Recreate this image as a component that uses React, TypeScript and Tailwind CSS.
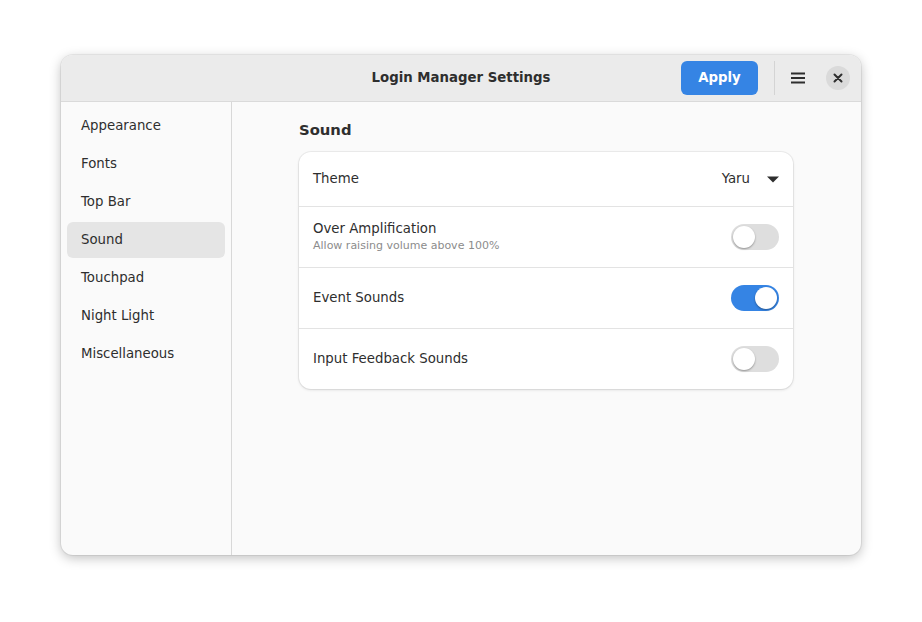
import { useState } from 'react';

const sections = ['Appearance', 'Fonts', 'Top Bar', 'Sound', 'Touchpad', 'Night Light', 'Miscellaneous'];

function Toggle({ on, onChange }: { on: boolean; onChange: () => void }) {
  return (
    <button
      onClick={onChange}
      className={`relative w-[48px] h-[26px] rounded-full shrink-0 ${on ? 'bg-[#3584e4]' : 'bg-[#dedede]'}`}
    >
      <span
        className={`absolute top-[2px] w-[22px] h-[22px] rounded-full bg-white shadow-[0_1px_2px_rgba(0,0,0,0.35)] ${on ? 'left-[24px]' : 'left-[2px]'}`}
      />
    </button>
  );
}

export default function App() {
  const [active, setActive] = useState('Sound');
  const [overAmp, setOverAmp] = useState(false);
  const [eventSounds, setEventSounds] = useState(true);
  const [feedback, setFeedback] = useState(false);

  return (
    <div
      className="w-[922px] h-[622px] bg-white pt-[55px] pl-[61px] text-[#2e2e2e]"
      style={{ fontFamily: '"DejaVu Sans", "Noto Sans", sans-serif' }}
    >
      <div className="w-[800px] h-[500px] rounded-[12px] overflow-hidden flex flex-col bg-[#fafafa] shadow-[0_3px_12px_rgba(0,0,0,0.25),0_0_0_1px_rgba(0,0,0,0.06)]">
        {/* Header bar */}
        <header className="relative h-[47px] shrink-0 bg-[#ebebeb] border-b border-[#dadada] flex items-center justify-end pr-[11px] pb-[1px]">
          <div className="absolute inset-0 flex items-center justify-center pointer-events-none">
            <span className="text-[13.3px] font-bold text-[#2e2e2e]">Login Manager Settings</span>
          </div>
          <button className="h-[34px] w-[77px] rounded-[6px] bg-[#3584e4] text-white text-[13.3px] font-bold">
            Apply
          </button>
          <div className="w-px h-[34px] bg-[#d4d4d4] ml-[16px] mr-[11px]" />
          <button className="w-[24px] h-[24px] flex items-center justify-center">
            <svg width="16" height="16" viewBox="0 0 16 16">
              <rect x="1" y="2.5" width="14" height="2" fill="#2e2e2e" />
              <rect x="1" y="7" width="14" height="2" fill="#2e2e2e" />
              <rect x="1" y="11.5" width="14" height="2" fill="#2e2e2e" />
            </svg>
          </button>
          <button className="ml-[16px] w-[24px] h-[24px] rounded-full bg-[#dadada] flex items-center justify-center">
            <svg width="10" height="10" viewBox="0 0 10 10">
              <path d="M1.5 1.5 L8.5 8.5 M8.5 1.5 L1.5 8.5" stroke="#2e2e2e" strokeWidth="2" strokeLinecap="round" />
            </svg>
          </button>
        </header>

        <div className="flex flex-1 min-h-0">
          {/* Sidebar */}
          <nav className="w-[171px] shrink-0 border-r border-[#d8d8d8] px-[6px] pt-[6px] flex flex-col gap-[2px]">
            {sections.map(s => (
              <button
                key={s}
                onClick={() => setActive(s)}
                className={`h-[36px] rounded-[6px] text-left pl-[14px] text-[13.3px] ${active === s ? 'bg-[#e5e5e5]' : ''}`}
              >
                {s}
              </button>
            ))}
          </nav>

          {/* Content */}
          <main className="flex-1 pl-[67px] pt-[18px]">
            <h2 className="text-[14.8px] font-bold h-[20px] leading-[20px]">Sound</h2>
            <div className="mt-[12px] w-[494px] rounded-[12px] bg-white shadow-[0_0_0_1px_rgba(0,0,0,0.05),0_1px_3px_rgba(0,0,0,0.12)] flex flex-col">
              <div className="h-[55px] flex items-center justify-between px-[14px] border-b border-[#e3e3e3]">
                <span className="text-[13.3px]">Theme</span>
                <div className="flex items-center gap-[17px]">
                  <span className="text-[13.3px]">Yaru</span>
                  <svg width="12" height="12" viewBox="0 0 12 12">
                    <path d="M0 3.5 L12 3.5 L6 9.5 Z" fill="#2e2e2e" />
                  </svg>
                </div>
              </div>
              <div className="h-[61px] flex items-center justify-between px-[14px] border-b border-[#e3e3e3]">
                <div className="flex flex-col">
                  <span className="text-[13.3px] leading-[18px]">Over Amplification</span>
                  <span className="text-[11px] leading-[16px] text-[#8c8c8c]">Allow raising volume above 100%</span>
                </div>
                <Toggle on={overAmp} onChange={() => setOverAmp(!overAmp)} />
              </div>
              <div className="h-[61px] flex items-center justify-between px-[14px] border-b border-[#e3e3e3]">
                <span className="text-[13.3px]">Event Sounds</span>
                <Toggle on={eventSounds} onChange={() => setEventSounds(!eventSounds)} />
              </div>
              <div className="h-[60px] flex items-center justify-between px-[14px]">
                <span className="text-[13.3px]">Input Feedback Sounds</span>
                <Toggle on={feedback} onChange={() => setFeedback(!feedback)} />
              </div>
            </div>
          </main>
        </div>
      </div>
    </div>
  );
}
